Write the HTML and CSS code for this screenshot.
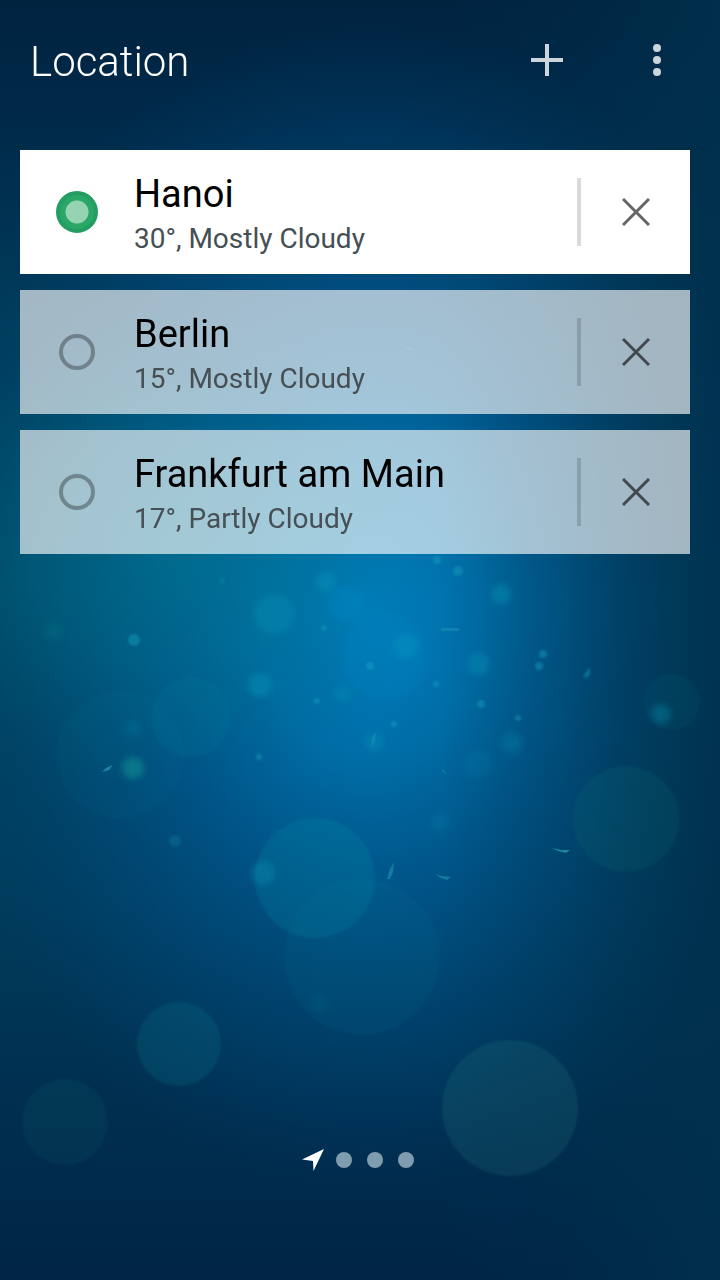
FILE: index.html
```html
<!DOCTYPE html>
<html lang="en">
  <head>
    <meta charset="utf-8">
    <meta name="viewport" content="width=device-width, initial-scale=1">
    <title>Location</title>
    <link rel="stylesheet" href="styles.css">
  </head>
  <body>
    <svg class="backdrop" viewBox="0 0 720 1280" preserveAspectRatio="xMidYMid slice" aria-hidden="true">
      <defs>
        <linearGradient id="deep" x1="0" y1="0" x2="0" y2="1">
          <stop offset="0" stop-color="#002340"/>
          <stop offset="0.1" stop-color="#002a4a"/>
          <stop offset="0.25" stop-color="#003c5c"/>
          <stop offset="0.47" stop-color="#004860"/>
          <stop offset="0.7" stop-color="#003c5c"/>
          <stop offset="0.88" stop-color="#002d4e"/>
          <stop offset="1" stop-color="#002546"/>
        </linearGradient>
        <radialGradient id="glow">
          <stop offset="0" stop-color="#0080c0"/>
          <stop offset="0.25" stop-color="#0072ae" stop-opacity="0.9"/>
          <stop offset="0.5" stop-color="#005c98" stop-opacity="0.68"/>
          <stop offset="0.75" stop-color="#004c80" stop-opacity="0.42"/>
          <stop offset="1" stop-color="#004070" stop-opacity="0"/>
        </radialGradient>
        <radialGradient id="teal">
          <stop offset="0" stop-color="#007a90" stop-opacity="0.55"/>
          <stop offset="0.5" stop-color="#00748c" stop-opacity="0.34"/>
          <stop offset="1" stop-color="#006078" stop-opacity="0"/>
        </radialGradient>
        <linearGradient id="shade" x1="0" y1="0" x2="1" y2="0">
          <stop offset="0" stop-color="#00304c" stop-opacity="0"/>
          <stop offset="0.45" stop-color="#00304c" stop-opacity="0.25"/>
          <stop offset="1" stop-color="#00304c" stop-opacity="0.85"/>
        </linearGradient>
        <filter id="soft" x="-50%" y="-50%" width="200%" height="200%" color-interpolation-filters="sRGB">
          <feGaussianBlur stdDeviation="3"/>
        </filter>
        <filter id="edge" color-interpolation-filters="sRGB"><feGaussianBlur stdDeviation="1"/></filter>
      </defs>
      <rect width="720" height="1280" fill="url(#deep)"/>
      <ellipse cx="370" cy="610" rx="440" ry="590" fill="url(#glow)"/>
      <ellipse cx="170" cy="550" rx="270" ry="240" fill="url(#teal)"/>
      <rect x="440" width="280" height="1280" fill="url(#shade)"/>

      <g fill="#0096aa" filter="url(#edge)">
        <circle cx="315" cy="878" r="60" opacity="0.2"/>
        <circle cx="362" cy="957" r="78" opacity="0.07"/>
        <circle cx="191" cy="717" r="40" opacity="0.1"/>
        <circle cx="120" cy="755" r="64" opacity="0.05"/>
        <circle cx="672" cy="702" r="28" opacity="0.07"/>
        <circle cx="626" cy="819" r="53" fill="#148c82" opacity="0.12"/>
        <circle cx="179" cy="1044" r="42" fill="#0a8c9b" opacity="0.18"/>
        <circle cx="65" cy="1122" r="43" fill="#148c82" opacity="0.1"/>
        <circle cx="510" cy="1108" r="68" fill="#2f8c8c" opacity="0.17"/>
      </g>

      <g fill="#0aa0c0" filter="url(#soft)">
        <circle cx="274" cy="614" r="20" opacity="0.25"/>
        <circle cx="345" cy="604" r="18" fill="#0090d0" opacity="0.25"/>
        <circle cx="385" cy="656" r="44" fill="#0090d0" opacity="0.15"/>
        <circle cx="326" cy="582" r="10" opacity="0.32"/>
        <circle cx="406" cy="646" r="12" opacity="0.35"/>
        <circle cx="260" cy="685" r="12" opacity="0.35"/>
        <circle cx="501" cy="594" r="10" opacity="0.35"/>
        <circle cx="479" cy="664" r="11" opacity="0.3"/>
        <circle cx="342" cy="694" r="9" opacity="0.2"/>
        <circle cx="374" cy="742" r="10" opacity="0.25"/>
        <circle cx="512" cy="743" r="11" opacity="0.2"/>
        <circle cx="478" cy="764" r="14" opacity="0.12"/>
        <circle cx="440" cy="822" r="10" opacity="0.14"/>
        <circle cx="263" cy="873" r="12" opacity="0.3"/>
        <circle cx="133" cy="728" r="8" opacity="0.14"/>
        <circle cx="133" cy="768" r="11" fill="#14a89e" opacity="0.42"/>
        <circle cx="661" cy="714" r="10" opacity="0.3"/>
        <circle cx="53" cy="631" r="9" fill="#14a89e" opacity="0.12"/>
        <circle cx="320" cy="1003" r="9" opacity="0.08"/>
      </g>

      <g fill="#1ca8c4" filter="url(#edge)" opacity="0.4">
        <circle cx="134" cy="640" r="6"/>
        <circle cx="458" cy="571" r="5"/>
        <circle cx="437" cy="560" r="4"/>
        <circle cx="436" cy="684" r="3"/>
        <circle cx="481" cy="704" r="4"/>
        <circle cx="518" cy="718" r="3"/>
        <circle cx="543" cy="654" r="4"/>
        <circle cx="539" cy="666" r="4"/>
        <path d="M583 676l4-5 3-4 0 8-4 3z"/>
        <circle cx="370" cy="666" r="4"/>
        <circle cx="324" cy="628" r="3"/>
        <circle cx="317" cy="701" r="3"/>
        <circle cx="394" cy="724" r="3"/>
        <circle cx="259" cy="757" r="3"/>
        <circle cx="222" cy="581" r="3" opacity="0.4"/>
        <circle cx="175" cy="841" r="6" opacity="0.5"/>
      </g>

      <g fill="#30acc0" opacity="0.6">
        <path d="M102 772l4-4 7-3-4 5z"/>
        <path d="M441 628h18v3h-18z" opacity="0.5"/>
        <path d="M387 879l3-10 4-7-1 10-3 7z" opacity="0.7"/>
        <path d="M435 874l7 2 9 1-4 3-6-2z" opacity="0.7"/>
        <path d="M552 848l9 2 9 0-4 3-8-2z"/>
        <path d="M371 746l1-8 4-6-1 10z" opacity="0.5"/>
        <path d="M441 768l3 2 3 5-4-3z" opacity="0.5"/>
        <path d="M402 348l6 0 8 1-5 1z" opacity="0.5"/>
      </g>
    </svg>

    <header class="bar">
      <h1>Location</h1>
      <button type="button" class="action" aria-label="Add location">
        <svg width="32" height="32" viewBox="0 0 32 32"><path d="M14 0h4v14h14v4H18v14h-4V18H0v-4h14z"/></svg>
      </button>
      <button type="button" class="action" aria-label="More options">
        <svg width="10" height="32" viewBox="0 0 10 32"><circle cx="5" cy="4" r="4"/><circle cx="5" cy="16" r="4"/><circle cx="5" cy="28" r="4"/></svg>
      </button>
    </header>

    <main class="places">
      <div class="place">
        <input type="radio" name="place" id="hanoi" checked>
        <label for="hanoi">
          <span class="city">Hanoi</span>
          <span class="weather">30°, Mostly Cloudy</span>
        </label>
        <button type="button" class="remove" aria-label="Remove Hanoi">
          <svg width="28" height="28" viewBox="0 0 28 28"><path d="M1 1l26 26M27 1L1 27"/></svg>
        </button>
      </div>
      <div class="place">
        <input type="radio" name="place" id="berlin">
        <label for="berlin">
          <span class="city">Berlin</span>
          <span class="weather">15°, Mostly Cloudy</span>
        </label>
        <button type="button" class="remove" aria-label="Remove Berlin">
          <svg width="28" height="28" viewBox="0 0 28 28"><path d="M1 1l26 26M27 1L1 27"/></svg>
        </button>
      </div>
      <div class="place">
        <input type="radio" name="place" id="frankfurt">
        <label for="frankfurt">
          <span class="city">Frankfurt am Main</span>
          <span class="weather">17°, Partly Cloudy</span>
        </label>
        <button type="button" class="remove" aria-label="Remove Frankfurt am Main">
          <svg width="28" height="28" viewBox="0 0 28 28"><path d="M1 1l26 26M27 1L1 27"/></svg>
        </button>
      </div>
    </main>

    <nav class="pages" aria-label="Pages">
      <button type="button" class="here" aria-label="Current location">
        <svg width="22" height="22" viewBox="0 0 22 22"><path d="M22 0L11.500 22L11 12L0 10.500z"/></svg>
      </button>
      <button type="button" class="dot" aria-label="Page 2"></button>
      <button type="button" class="dot" aria-label="Page 3"></button>
      <button type="button" class="dot" aria-label="Page 4"></button>
    </nav>
  </body>
</html>
```
FILE: styles.css
```css
*{
    box-sizing: border-box;
}
body{
    margin: 0;
    min-height: 100vh;
    display: flex;
    flex-direction: column;
    font-family: Roboto, "Liberation Sans", sans-serif;
    background: #002a4a;
}
button{
    margin: 0;
    padding: 0;
    border: 0;
    background: none;
    cursor: pointer;
}
svg{
    display: block;
}
.backdrop{
    position: fixed;
    inset: 0;
    width: 100%;
    height: 100%;
    z-index: -1;
}

.bar{
    display: flex;
    align-items: center;
    height: 120px;
    padding: 0 8px 0 30px;
}
.bar h1{
    flex: 1;
    margin: 0;
    padding-top: 4px;
    font-size: 42px;
    font-weight: 300;
    line-height: 48px;
    color: #fff;
}
.action{
    display: flex;
    align-items: center;
    justify-content: center;
    width: 110px;
    height: 80px;
    fill: #ccd5db;
}

.places{
    display: flex;
    flex-direction: column;
    gap: 16px;
    padding: 30px 30px 30px 20px;
}
.place{
    display: flex;
    align-items: center;
    min-height: 124px;
    padding-left: 36px;
    background: rgba(255, 255, 255, 0.64);
}
.place:has(:checked){
    background: #fff;
}
.place input{
    appearance: none;
    flex: none;
    width: 36px;
    height: 36px;
    margin: 0 3px;
    border: 4px solid rgba(0, 0, 0, 0.31);
    border-radius: 50%;
}
.place input:checked{
    width: 42px;
    height: 42px;
    margin: 0;
    border-color: #249e60;
    background: radial-gradient(circle, #95d3b3 11px, #2aa768 12px);
}
.place label{
    flex: 1;
    padding: 6px 0 0 36px;
}
.city, .weather{
    display: block;
}
.city{
    font-size: 38px;
    line-height: 48px;
    color: #000;
}
.weather{
    font-size: 28px;
    line-height: 42px;
    color: #454f54;
}
.remove{
    display: flex;
    align-items: center;
    justify-content: center;
    width: 113px;
    height: 68px;
    border-left: 4px solid rgba(0, 0, 0, 0.15);
}
.remove path{
    stroke: rgba(0, 0, 0, 0.6);
    stroke-width: 3;
}

.pages{
    display: flex;
    align-items: center;
    justify-content: center;
    gap: 12px;
    margin-top: auto;
    padding: 0 4px 109px 0;
}
.here{
    fill: #fff;
}
.dot{
    width: 16px;
    height: 16px;
    border-radius: 50%;
    background: #809db0;
}
.dot + .dot{
    margin-left: 3px;
}
```
